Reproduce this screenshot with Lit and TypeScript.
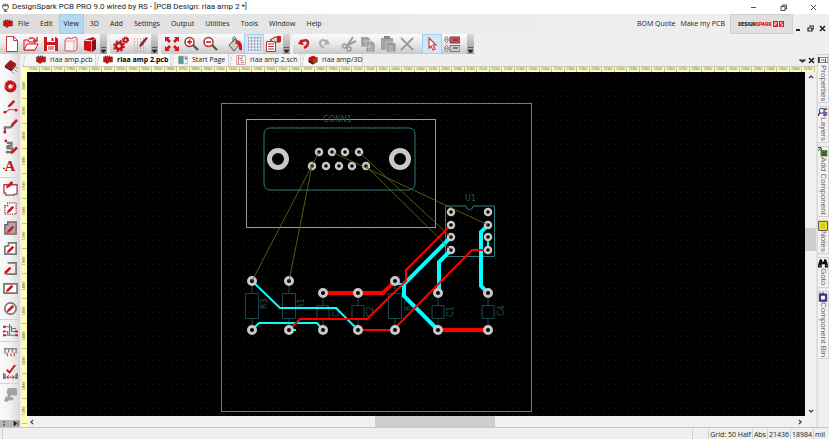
import { LitElement, html, svg, css, SVGTemplateResult } from "lit";
import { customElement, property } from "lit/decorators.js";
import { classMap } from "lit/directives/class-map.js";

const RED = "#d01820";
const GREY = "#9a9a9a";

const pen = (x: number, y: number) => svg`
  <path d="M${x} ${y + 5}l5-5 2 2-5 5-3 1z" fill=${RED} />`;

const ICONS: Record<string, SVGTemplateResult> = {
  app: svg`<path d="M3 4h10v5l-3 3H6L3 9z" fill="#fff" stroke="#444" stroke-width="1.5"/><path d="M5 1v5M8 1v5M11 1v5M8 12v3M6 12v3h5" stroke="#444" stroke-width="1.4" fill="none"/>`,
  chip: svg`<path d="M1 3h14v8H9l-1 2H5l-1-2H1z" fill="#d81818" stroke="#801010"/><path d="M4 3V1M7 3V1M10 3V1M4 8h3M9 6h3" stroke="#300" stroke-width="1.3"/>`,
  page: svg`<path d="M2.500 .5h7l4 4v11h-11z" fill="#fff" stroke="#c8323a"/><path d="M9.500 .5v4h4" fill="none" stroke="#c8323a"/>`,
  open: svg`<path d="M1 4h4l1 2h6v8H1z" fill="#f6e4e4" stroke=${RED}/><path d="M1 14l3-6h11l-3 6z" fill="#fff" stroke=${RED}/><path d="M6 3q4-3 7 2M14 1v4h-4" fill="none" stroke=${RED} stroke-width="1.300"/>`,
  save: svg`<path d="M1 1h12l2 2v12H1z" fill=${RED}/><path d="M4 1h8v5H4z" fill="#fff"/><path d="M8.500 2h2v3h-2z" fill=${RED}/><path d="M4 9h8v6H4z" fill="#fff"/><path d="M5 11h6M5 13h6" stroke=${RED}/>`,
  folder: svg`<path d="M2 4l2-2h3l1 1 4-2 2 1v11l-2 2H2z" fill="#f8f2f2" stroke="#c8505a"/><path d="M2 5h9v10M11 5l3-3" fill="none" stroke="#dca0a4"/>`,
  book: svg`<path d="M2 4l9-3 3 2v10l-4 3-8-2z" fill="#c81018"/><path d="M2 4l8 1v11M10 5l4-2" fill="none" stroke="#fff"/><path d="M10 5l4-2v10l-4 3z" fill="#8c0c12"/>`,
  gears: svg`<g fill="none" stroke="#c01018"><circle cx="6" cy="10" r="3.200" stroke-width="2.800"/><circle cx="6" cy="10" r="5.200" stroke-width="1.600" stroke-dasharray="2.100 2"/><circle cx="12.500" cy="4" r="1.900" stroke-width="1.800"/><circle cx="12.500" cy="4" r="3.100" stroke-width="1.100" stroke-dasharray="1.300 1.200"/></g>`,
  gridpen: svg`<path d="M1 3h11M1 6h11M1 9h11M1 12h11M1 15h11" stroke="#cc6468" stroke-dasharray="1 2"/><path d="M7 8l6-7 2 1-6 8-3 1z" fill="#8e2a2e"/>`,
  fit: svg`<g fill=${RED}><path d="M1 1h5L4.500 2.500 7 5 5 7 2.500 4.500 1 6zM15 1v5l-1.500-1.500L11 7 9 5l2.500-2.500L10 1zM1 15v-5l1.500 1.500L5 9l2 2-2.500 2.500L6 15zM15 15h-5l1.500-1.500L9 11l2-2 2.500 2.500L15 10z"/></g>`,
  zoomin: svg`<circle cx="6.500" cy="6" r="4.500" fill="#fff" stroke="#a83038" stroke-width="1.500"/><path d="M10 9l5 5" stroke="#555" stroke-width="2.400"/><path d="M4 6h5M6.500 3.500v5" stroke=${RED} stroke-width="1.600"/>`,
  zoomout: svg`<circle cx="6.500" cy="6" r="4.500" fill="#fff" stroke="#a83038" stroke-width="1.500"/><path d="M10 9l5 5" stroke="#555" stroke-width="2.400"/><path d="M4 6h5" stroke=${RED} stroke-width="1.600"/>`,
  bucket: svg`<path d="M2 9l6-6 5 5-6 7z" fill="#ccc" stroke="#555"/><path d="M6 6V2q2-3 3 1v5" fill="none" stroke="#555"/><path d="M10 4q6 1 5 10-2 1-3-1 0-4-3-6z" fill=${RED}/>`,
  grid: svg`<path d="M2 2h13M2 5h13M2 8h13M2 11h13M2 14h13" stroke="#a83a52" stroke-width="1.200" stroke-dasharray="1.200 1.800"/>`,
  list: svg`<path d="M1.500 5.500h9v10h-9z" fill="#fff" stroke="#b03038"/><path d="M3 8h6M3 10.500h6M3 13h6" stroke="#b03038"/><path d="M5 4l5-3h5v5H8z" fill="#f0c8b8" stroke="#733"/><path d="M12 0h4v6h-4z" fill=${RED}/>`,
  undo: svg`<path d="M4 6q8-4 8 1 0 3-4 5" fill="none" stroke=${RED} stroke-width="2.400"/><path d="M2 8l3-5 3 6z" fill=${RED}/>`,
  redo: svg`<path d="M12 6Q4 2 4 7q0 3 4 5" fill="none" stroke="#adadad" stroke-width="2.200"/><path d="M14 8l-3-5-3 6z" fill="#adadad"/>`,
  cut: svg`<path d="M12 1L6 10M15 5L5 10" stroke=${GREY} stroke-width="2"/><circle cx="3.500" cy="10" r="2" fill="none" stroke=${GREY} stroke-width="1.500"/><circle cx="8" cy="13" r="2" fill="none" stroke=${GREY} stroke-width="1.500"/>`,
  copy: svg`<path d="M1 1h7l2 2v8H1zM6 5h6l3 3v8H6z" fill=${GREY} stroke="#ddd" stroke-width=".7"/><path d="M3 4h4M3 6h3M8 10h5M8 12h5M8 14h5" stroke="#ccc" stroke-width=".8"/>`,
  paste: svg`<path d="M1 2h12v12H1z" fill="#a2a2a2"/><path d="M4 0h6v3H4z" fill="#888"/><path d="M6 6h7l3 2v8H6z" fill=${GREY} stroke="#ddd" stroke-width=".7"/><path d="M8 10h5M8 12h5M8 14h5" stroke="#ccc" stroke-width=".8"/>`,
  remove: svg`<path d="M2 2l12 12M14 2L2 14" stroke=${GREY} stroke-width="1.800"/>`,
  cursor: svg`<path d="M5 2v10l2-2 2 4 2-1-2-4h3z" fill="#fff" stroke="#d03a40" stroke-width="1.200"/>`,
  swap: svg`<path d="M6 1h10v6H6z" fill="#e0484c" stroke="#555"/><path d="M6 9.500h10v6H6z" fill="#ccc" stroke="#777"/><path d="M2.500 0l2 3h-4zM2.500 7l2-3h-4zM2.500 9l2 3h-4zM2.500 16l2-3h-4z" fill="#fff" stroke="#777" stroke-width=".8"/><path d="M9 4h5M9 12h5" stroke="#333"/>`,
  comp: svg`<path d="M2 7l6-6 6 4-5 6z" fill="#a81018"/><path d="M2 7l7 4v2L2 9zM9 11l5-6v2l-5 6z" fill="#600a0e"/><path d="M8 12l4 4M11 10l4 4M13 8l3 3" stroke="#888"/>`,
  pad: svg`<circle cx="8" cy="8" r="4.400" fill="none" stroke="#c41018" stroke-width="4"/><circle cx="7" cy="6" r="4.500" fill="none" stroke="#e86066" stroke-width=".8"/>`,
  wire: svg`<path d="M1 14h2l4-3 8 1" fill="none" stroke="#b55" stroke-width="1.200"/><circle cx="2" cy="14" r="1.500" fill=${RED}/><circle cx="14" cy="12" r="1.500" fill=${RED}/>${pen(6, 1)}`,
  track: svg`<path d="M2 14V9h6l3-3" fill="none" stroke="#777" stroke-width="2.400"/><circle cx="2" cy="14" r="1.400" fill=${RED}/>${pen(9, 0)}`,
  curve: svg`<path d="M4 4H9v3q-6 0-4 3h5v4H3" fill="none" stroke="#777" stroke-width="2.400"/><circle cx="3" cy="2" r="1.500" fill=${RED}/>${pen(9, 8)}`,
  text: svg`<path d="M0 10h2" stroke=${RED} stroke-width="1.500"/>`,
  shape1: svg`<path d="M1 4h4q2 2 4 0h6v10h-3v1H3v-2H1z" fill="#fff" stroke="#a0484c" stroke-width="1.400"/>${pen(4, 0)}`,
  shape2: svg`<path d="M2 5h3V2h9v12H2z" fill="#fff" stroke="#a0484c" stroke-width="1.500" stroke-dasharray="1.500 1"/>${pen(5, 5)}`,
  shape3: svg`<path d="M2 4h3V1h9v13H2z" fill="#aaa" stroke="#8a5a5c" stroke-width="1.500"/>${pen(5, 5)}`,
  shape4: svg`<path d="M2 6l4-1V2h8v12H2z" fill="#fff" stroke="#777" stroke-width="1.800"/>${pen(5, 5)}`,
  shape5: svg`<path d="M5 2h9v12H3" fill="none" stroke="#777" stroke-width="1.800"/>${pen(2, 6)}`,
  rect: svg`<path d="M1 3h14v10H1z" fill="#fff" stroke="#777" stroke-width="1.800"/>${pen(4, 4)}`,
  circle: svg`<circle cx="8" cy="8" r="6" fill="#fff" stroke="#777" stroke-width="1.800"/>${pen(5, 4)}`,
  net: svg`<path d="M1 4h8v5h6M1 9h4v4h10M1 13h3M7 1v12M9 6h5" fill="none" stroke="#777" stroke-width="1.200"/><path d="M0 4h3M0 9h2M0 13h3M13 9h3M13 13h3" stroke=${RED} stroke-width="2"/>`,
  measure: svg`<path d="M1 4h14M2 4v5M6 4v4M10 4v4M14 4v5" stroke="#888" stroke-width="1.500"/><path d="M4 8l1 4M8 9l1 3M12 8v4" stroke="#c44" stroke-width="1.200"/>`,
  check: svg`<path d="M0 8l3 2v5H0zM16 8l-3 2v5h3z" fill="#777"/><path d="M4 13h8M6 11l-2 2 2 2M10 11l2 2-2 2" stroke=${RED} fill="none"/><path d="M4 5l3 3 6-8" stroke=${RED} stroke-width="2.200" fill="none"/>`,
  push: svg`<path d="M5 1h9l1 2v6H8v2h3v3H7l-3 2-3-1 2-5h2V8L4 6z" fill="#a2a2a2"/>`,
  start: svg`<path d="M1 2h14v12H1z" fill="#f4f4f4" stroke="#999"/><path d="M1 2h8v12H1z" fill="#5a9a94"/><path d="M11 4h3v3h-3z" fill="#2a5ca0"/>`,
  sch: svg`<path d="M1 1h14v14H1z" fill="#fff" stroke="#c66"/><path d="M4 1v14M4 5h4v4h4M8 12h5M10 2v4" stroke="#a33" fill="none"/>`,
  cube: svg`<path d="M8 1l7 3v7l-7 4-7-4V4z" fill="#c41010"/><path d="M8 8l7-4v7l-7 4z" fill="#6a6a00"/><path d="M8 8l7-4v3l-7 4z" fill="#e02020"/><path d="M1 8l7 4v3l-7-4z" fill="#222"/>`,
  props: svg`<path d="M0 4h16v8H0z" fill="#fff" stroke="#333"/><path d="M0 4h3v8H0z" fill="#333"/><path d="M5 8h2M8 7l2 3M12 6v5" stroke="#333" stroke-width="1.500"/>`,
  layers: svg`<path d="M7 4l5-3 4 2-5 3zM7 13l5-3 4 2-5 3z" fill="#c23a44"/><path d="M6 9l6-2 4 2-6 3z" fill="#5a5ac0"/><circle cx="6" cy="6" r="4" fill="#dff0ff" stroke="#223a6a" stroke-width="1.600"/><path d="M3 9l-3 5" stroke="#222" stroke-width="2"/>`,
  add: svg`<path d="M4 5h11v10H4z" fill="#1f9a3a"/><path d="M6 7l4 4 4-4M6 14l4-3 4 3" stroke="#b01818" stroke-width="2" fill="none"/><path d="M0 1h5v5M0 6l4-4" stroke="#222" stroke-width="1.500" fill="none"/>`,
  notes: svg`<path d="M1 1h14v14H1z" fill="#fff600" stroke="#444" stroke-width="1.500"/><path d="M4 5h8M4 8h8M4 11h8" stroke="#777"/>`,
  goto: svg`<path d="M3 2h3l1 4h2l1-4h3l3 9v4h-5v-5H6v5H0v-4z" fill="#111"/><path d="M2 12h2M13 12h2" stroke="#fff"/>`,
  bin: svg`<path d="M2 3h12v12H2z" fill="#3a34a8" stroke="#222"/><path d="M5 6h6v6H5z" fill="#fff"/><path d="M2 1l3 3M8 0v3" stroke="#222" stroke-width="1.500"/>`,
};

@customElement("ds-icon")
class DsIcon extends LitElement {
  @property() name = "";
  @property({ type: Number }) size = 16;
  static styles = css`
    :host { display: inline-flex; flex: none; }
  `;
  render() {
    return html`<svg width=${this.size} height=${this.size} viewBox="0 0 16 16" aria-hidden="true">${ICONS[this.name]}</svg>`;
  }
}

type Pt = [number, number];

@customElement("pcb-board")
class PcbBoard extends LitElement {
  static styles = css`
    :host { display: block; }
    svg { display: block; }
    text { font-family: "DejaVu Sans", sans-serif; font-size: 8px; fill: #23565a; }
    .edge { fill: none; stroke: #00d000; stroke-width: 1; }
    .court { fill: none; stroke: #9a9a9a; stroke-width: 1; }
    .part { fill: none; stroke: #1c484a; stroke-width: 1; }
    .outline { fill: none; stroke: #2f7c80; stroke-width: 1; }
    .wire { fill: none; stroke: #66661c; stroke-width: 1; stroke-opacity: 0.85; }
    .cyan { fill: none; stroke: #00ffff; }
    .red { fill: none; stroke: #ff0000; }
    .w4 { stroke-width: 4; }
    .w2 { stroke-width: 2; }
    .pad { fill: #000; stroke: #c8c8c8; stroke-width: 3; }
    .small { stroke-width: 2.5; }
    .hole { stroke-width: 5; }
  `;

  render() {
    const pads: Pt[] = [
      [252, 281], [252, 330], [289, 281], [289, 330], [323, 293], [323, 330], [358, 293],
      [358, 330], [395, 281], [395, 330], [438, 293], [438, 330], [488, 293], [488, 330],
    ];
    const pins: Pt[] = [
      [319, 152], [332, 152], [345, 152], [359, 152],
      [312, 166], [326, 166], [339, 166], [352, 166], [366, 166],
      [451, 212], [451, 225], [451, 237], [451, 250],
      [488, 212], [488, 225], [488, 237], [488, 250],
    ];
    const resistors = [252, 289, 395];
    const caps = [323, 358, 438, 488];
    const labels: [string, number, number][] = [
      ["R3", 267, 309], ["R1", 304, 309], ["C3", 339, 317], ["C2", 373, 317],
      ["R2", 411, 311], ["C1", 453, 317], ["C4", 504, 316],
    ];
    return html`<svg width="313" height="310" viewBox="220 102 313 310" role="img" aria-label="PCB layout">
      <rect class="edge" x="221.5" y="103.5" width="310" height="308" />
      <rect class="court" x="246.5" y="119.5" width="189" height="108" />
      <rect x="264" y="128" width="151" height="62" rx="6" class="outline" />
      <text x="323" y="122">CONN1</text>
      <text x="465" y="201">U1</text>
      <path class="outline" d="M445.500 206H466a3 3 0 0 0 7 0H494.500V256.500H445.500z" />
      ${resistors.map((x) => svg`<path class="part" d="M${x} 281V293.500M${x} 318V330M${x - 6.5} 293.500h13v25h-13z" />`)}
      ${caps.map((x) => svg`<path class="part" d="M${x} 293V305.500M${x} 318V330M${x - 6} 305.500h12v13h-12z" />`)}
      ${labels.map(([t, x, y]) => svg`<text transform="translate(${x} ${y}) rotate(-90)">${t}</text>`)}
      <path class="cyan w4" d="M451 237L404 284V296L438 330M451 250L439 262V293M488 225L481 232V286L488 293" />
      <path class="cyan w2" d="M252 281L280 308H336L358 330M252 330L259 323H317L323 330M289 330H296M395 281L398 284H404M488 237V250" />
      <path class="red w4" d="M323 293H383L395 281M438 330H488" />
      <path class="red w2" d="M451 225L406 270V281L367 319H300L289 330M358 330H395M395 328L472 250H488" />
      ${pins.map(([x, y]) => svg`<circle class="pad small" cx=${x} cy=${y} r="3" />`)}
      ${pads.map(([x, y]) => svg`<circle class="pad" cx=${x} cy=${y} r="3.500" />`)}
      <circle class="pad hole" cx="278" cy="159" r="8.500" />
      <circle class="pad hole" cx="400" cy="159" r="8.500" />
      <path class="wire" d="M319 152L252 281M312 166L289 281M332 152L488 225M359 152L451 237M366 166L451 250" />
    </svg>`;
  }
}

const MENU = ["File", "Edit", "View", "3D", "Add", "Settings", "Output", "Utilities", "Tools", "Window", "Help"];

const TABS = [
  { icon: "chip", label: "riaa amp.pcb", w: 74 },
  { icon: "chip", label: "riaa amp 2.pcb", active: true, w: 75 },
  { icon: "start", label: "Start Page", w: 58 },
  { icon: "sch", label: "riaa amp 2.sch", w: 72 },
  { icon: "cube", label: "riaa amp/3D", w: 62 },
];

const SIDE = [
  ["comp", "pad", "wire", "track", "curve", "text"],
  ["shape1", "shape2", "shape3", "shape4", "shape5", "rect", "circle"],
  ["net"],
  ["measure", "check"],
  ["push"],
];

const DOCK = [
  ["props", "Properties"], ["layers", "Layers"], ["add", "Add Component"],
  ["notes", "Notes"], ["goto", "Goto"], ["bin", "Component Bin"],
];

@customElement("app-root")
class AppRoot extends LitElement {
  static styles = css`
    :host {
      display: flex; flex-direction: column; height: 100vh; overflow: hidden;
      background: #efefef; color: #222;
      font: 7px/10px "Open Sans", "Noto Sans", sans-serif;
    }
    * { box-sizing: border-box; }
    button {
      margin: 0; padding: 0; border: 0; background: none; color: inherit; font: inherit;
      display: flex; align-items: center; justify-content: center; white-space: nowrap;
    }
    svg { display: block; }
    .title { display: flex; align-items: center; height: 14px; flex: none; background: #fff; padding: 0 12px 0 1px; }
    .title h1 { margin: 0 0 0 2px; font: 8px/10px Roboto, sans-serif; flex: 1; white-space: nowrap; }
    .win { display: flex; gap: 22px; }
    .win button { width: 8px; }
    .menu {
      display: flex; align-items: stretch; height: 20px; flex: none;
      background: linear-gradient(90deg, #dcdcdc, #ececec 55%, #efefef); padding-left: 3px;
    }
    .menu ds-icon { align-self: center; }
    .menu nav { display: flex; flex: 1; gap: 1px; }
    .menu nav button { padding: 0 5px; }
    .menu .current { background: #b3d9f2; outline: 1px solid #a4cdea; outline-offset: -1px; }
    .menu a { color: inherit; text-decoration: none; align-self: center; margin-right: 5px; }
    .brand {
      background: #e0e0e0; border: 1px solid #d0d0d0; width: 63px; gap: 1px;
      font: 900 5px/8px Roboto, sans-serif;
    }
    .brand em { font-style: normal; color: #e01020; }
    .mdi { display: flex; align-items: center; padding: 8px 3px 0 1px; gap: 4px; }
    .mdi button { width: 8px; }
    .tools { display: flex; height: 20px; flex: none; }
    .band { display: flex; align-items: stretch; background: linear-gradient(#fbfbfb, #e8e8e8 50%, #c8c8c8); margin-right: 3px; padding-left: 1px; border-radius: 2px; }
    .band:first-child { padding-left: 2px; }
    .set { display: flex; }
    .set button { flex: 1; }
    .set + .set { margin-left: 5px; }
    .on { background: #cfe6f7; outline: 1px solid #a9d0ee; outline-offset: -1px; }
    .band .grip { width: 7px; background: linear-gradient(#d8d8d8, #999); align-items: flex-end; padding-bottom: 1px; }
    .band:last-child .grip { margin-left: 5px; }
    .n1 { width: 98px; } .n2 { width: 40px; } .n3 { width: 58px; } .n4 { width: 78px; }
    .main { display: flex; flex: 1; min-height: 0; }
    .side {
      width: 20px; flex: none; display: flex; flex-direction: column; padding-top: 2px;
      background: linear-gradient(90deg, #fafafa, #f2f2f2 50%, #d8d8d8);
    }
    .side div { display: flex; flex-direction: column; padding-bottom: 1px; border-bottom: 1px solid #d4d4d4; }
    .side div:nth-last-child(2) { border: 0; }
    .side div button { height: 20px; position: relative; }
    .glyph { position: absolute; inset: 0; font: bold 15px/20px "Liberation Serif", serif; color: #c01820; text-align: center; }
    .side .more { margin-top: auto; height: 7px; width: 20px; background: #b4b4b4; gap: 10px; }
    .doc { flex: 1; min-width: 0; display: flex; flex-direction: column; padding-left: 2px; }
    .tabs { display: flex; height: 13px; flex: none; align-items: stretch; border-bottom: 1px solid #c8c8c8; }
    .tab { justify-content: flex-start; gap: 4px; background: linear-gradient(100deg, #efefef 3px, #c8c8c8 3px, #f6f6f6 4px); border-right: 1px solid #d8d8d8; padding-left: 7px; }
    .tab:first-child { padding-left: 14px; }
    .tab.active { font-weight: 700; background: linear-gradient(100deg, #efefef 3px, #c8c8c8 3px, #fff 4px); color: #000; }
    .tabs .end { margin-left: auto; display: flex; gap: 2px; padding-right: 2px; }
    .rule { background: #ffffb4; color: #4c4c20; font: 3px/5px "Liberation Sans", sans-serif; overflow: hidden; display: flex; flex: none; }
    .rule span { flex: none; text-align: center; border-right: 1px solid #c4c480; }
    .across { height: 5px; padding-left: 5px; }
    .across span { width: var(--step); }
    .down { width: 5px; flex-direction: column; padding-top: 2px; }
    .down span { writing-mode: vertical-rl; transform: rotate(180deg); height: 25px; width: 5px; border: 0; border-top: 1px solid #c4c480; }
    .view { flex: 1; display: flex; min-height: 0; }
    .pane { flex: 1; min-width: 0; display: flex; flex-direction: column; }
    .canvas {
      flex: 1; min-height: 0; overflow: hidden; padding: 30px 0 0 193px;
      background: radial-gradient(circle at 0 0, #1a1a1a 0 1px, transparent 1px) 0 0 / 6px 6px #000;
    }
    .bar { display: flex; flex: none; align-items: center; background: #f0f0f0; }
    .bar i { background: #cdcdcd; }
    .h { height: 11px; padding: 0 2px; }
    .h i { height: 11px; width: 120px; margin: 0 39% 0 auto; }
    .v { width: 12px; flex-direction: column; padding: 2px 0 13px; border-right: 1px solid #e2e2e2; }
    .track { flex: 1; display: flex; flex-direction: column; justify-content: center; padding-bottom: 10px; }
    .v i { width: 11px; height: 23px; }
    .dock { width: 12px; flex: none; display: flex; flex-direction: column; gap: 3px; border-left: 1px solid #d8d8d8; }
    .dock button {
      flex-direction: column; justify-content: flex-start; width: 11px; padding-bottom: 1px; border: 1px solid #d2d2d2; border-left: 0;
      font: 8px/10px "Liberation Sans", sans-serif; color: #666; background: #f4f4f4;
    }
    .dock span { writing-mode: vertical-rl; }
    .status { display: flex; height: 12px; flex: none; border-top: 1px solid #c8c8c8; padding: 1px 3px 0 2px; justify-content: flex-end; }
    .status span { border-left: 1px solid #ccc; padding: 0 1px; line-height: 12px; white-space: nowrap; }
    .status .msg { flex: 1; border-right: 1px solid #ccc; margin-right: 15px; }
  `;

  private set(cls: string, names: string[], on = "") {
    return html`<div class="set ${cls}">
      ${names.map((n) => html`<button class=${classMap({ on: n === on })} aria-label=${n}><ds-icon name=${n} size="16"></ds-icon></button>`)}
    </div>`;
  }

  private grip() {
    return html`<button class="grip" aria-label="More buttons"><svg width="5" height="6"><path d="M0 .5h5M0 3h5L2.500 6z" stroke="#222" stroke-width=".6" fill="#222"/></svg></button>`;
  }

  private arrow(d: string, label: string) {
    return html`<button aria-label=${label}><svg width="6" height="6"><path d=${d} fill="none" stroke="#444" stroke-width="1.300"/></svg></button>`;
  }

  private glyph(d: string, label: string, width = 1) {
    return html`<button aria-label=${label}><svg width="7" height="7"><path d=${d} fill="none" stroke="#222" stroke-width=${width}/></svg></button>`;
  }

  render() {
    const across = Array.from({ length: 63 }, (_, i) => 17500 + i * 100);
    const down = Array.from({ length: 14 }, (_, i) => 20400 - i * 200);
    return html`
      <header class="title">
        <ds-icon name="app" size="9"></ds-icon>
        <h1>DesignSpark PCB PRO 9.0 wired by RS - [PCB Design: riaa amp 2 *]</h1>
        <div class="win">
          ${this.glyph("M1 3.500h5", "Minimize", 0.8)}
          ${this.glyph("M1 2.500h4v4H1zM2.500 2V1h4v4H5", "Restore", 0.8)}
          ${this.glyph("M1 1l5 5M6 1L1 6", "Close", 0.8)}
        </div>
      </header>
      <div class="menu">
        <ds-icon name="chip" size="10"></ds-icon>
        <nav>${MENU.map((m) => html`<button class=${classMap({ current: m === "View" })}>${m}</button>`)}</nav>
        <a href="#bom">BOM Quote</a>
        <a href="#make">Make my PCB</a>
        <button class="brand"><span>DESIGN<em>SPARK</em></span>
          <svg width="12" height="6"><path d="M0 0h5v6H0zM6 0h5v6H6z" fill="#e01020"/><path d="M1.500 5V1.500h2v1.500h-2l2 2M9.500 1.500h-2v1.500h2v2h-2" stroke="#fff" stroke-width=".7" fill="none"/></svg>
        </button>
        <div class="mdi">
          ${this.glyph("M1 5h4", "Minimize document", 2)}
          ${this.glyph("M1 3h4v3H1zM3 2V1h4v3H5", "Restore document", 1.2)}
          ${this.glyph("M1 1l5 5M6 1L1 6", "Close document", 1.6)}
        </div>
      </div>
      <div class="tools">
        <div class="band">${this.set("n1", ["page", "open", "save", "folder", "book"])}${this.grip()}</div>
        <div class="band">${this.set("n2", ["gears", "gridpen"])}${this.grip()}</div>
        <div class="band">${this.set("n3", ["fit", "zoomin", "zoomout"])}${this.set("n3", ["bucket", "grid", "list"], "grid")}${this.grip()}</div>
        <div class="band">${this.set("n2", ["undo", "redo"])}${this.set("n4", ["cut", "copy", "paste", "remove"])}${this.set("n2", ["cursor", "swap"], "cursor")}${this.grip()}</div>
      </div>
      <div class="main">
        <div class="side">
          ${SIDE.map((g) => html`<div>${g.map((n) => html`<button aria-label=${n}>
            <ds-icon name=${n} size="15"></ds-icon>${n === "text" ? html`<span class="glyph">A</span>` : ""}
          </button>`)}</div>`)}
          <button class="more" aria-label="More tools"><svg width="18" height="5"><path d="M2 1h2M2 4h2" stroke="#333"/><path d="M13 0l3 2.500-3 2.500zM17 0v5" fill="#222" stroke="#222" stroke-width=".6"/></svg></button>
        </div>
        <div class="doc">
          <div class="tabs">
            ${TABS.map((t) => html`<button class="tab ${classMap({ active: !!t.active })}" style="width:${t.w}px">
              <ds-icon name=${t.icon} size="10"></ds-icon>${t.label}</button>`)}
            <div class="end">
              ${this.glyph("M1 3h5L3.500 5z", "Tab list", 1.2)}
              ${this.glyph("M1 1l5 5M6 1L1 6", "Close tab", 1.6)}
            </div>
          </div>
          <div class="rule across">${across.map((n, i) => html`<span style="--step:${i % 2 ? 12 : 13}px">${n}</span>`)}</div>
          <div class="view">
            <div class="rule down">${down.map((n) => html`<span>${n}</span>`)}</div>
            <div class="pane">
              <div class="canvas"><pcb-board></pcb-board></div>
              <div class="bar h">${this.arrow("M4 1L2 3l2 2", "Scroll left")}<i></i>${this.arrow("M2 1l2 2-2 2", "Scroll right")}</div>
            </div>
            <div class="bar v">${this.arrow("M1 4l2-2 2 2", "Scroll up")}<div class="track"><i></i></div>${this.arrow("M1 2l2 2 2-2", "Scroll down")}</div>
          </div>
        </div>
        <aside class="dock">
          ${DOCK.map(([n, l]) => html`<button><ds-icon name=${n} size="10"></ds-icon><span>${l}</span></button>`)}
        </aside>
      </div>
      <footer class="status">
        <span class="msg"></span>
        <span>Grid: 50 Half</span><span>Abs</span><span>21436</span><span>18984</span><span>mil</span>
      </footer>
    `;
  }
}
